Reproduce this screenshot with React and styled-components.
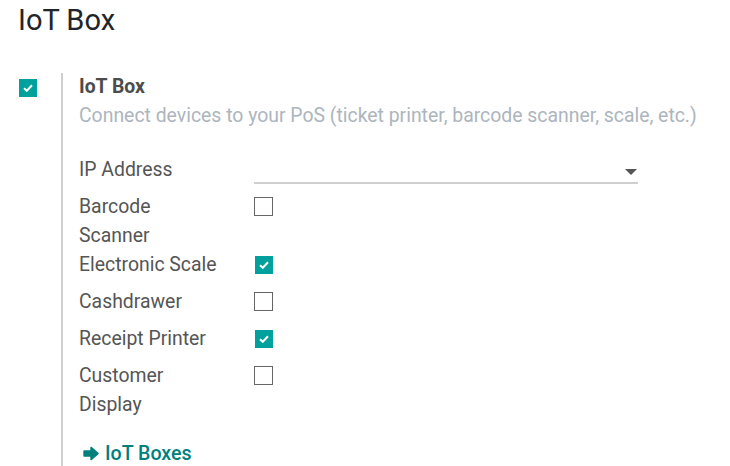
import React from 'react';
import styled, { createGlobalStyle } from 'styled-components';

const GlobalStyle = createGlobalStyle`
  body {
    margin: 0;
    background: #fff;
    font-family: Roboto, "Noto Sans", sans-serif;
  }
`;

const Page = styled.div`
  padding: 0 0 0 18px;
  height: 466px;
  overflow: hidden;
`;

const Title = styled.h2`
  margin: 0;
  padding-top: 2px;
  font-size: 29px;
  font-weight: 400;
  line-height: 36px;
  color: #212529;
`;

const Setting = styled.div`
  display: flex;
  margin-top: 35px;
`;

const LeftPane = styled.div`
  width: 43px;
  padding-top: 6px;
`;

const RightPane = styled.div`
  border-left: 2px solid #cfcfcf;
  padding-left: 16px;
  flex: 1;
  min-height: 400px;
`;

const SettingTitle = styled.div`
  font-size: 19.4px;
  font-weight: 700;
  line-height: 28px;
  color: #4c4c4c;
`;

const Description = styled.div`
  font-size: 19.4px;
  line-height: 29px;
  color: #adb5bd;
  margin-bottom: 25px;
`;

const Row = styled.div`
  display: flex;
  align-items: flex-start;
  min-height: 37px;
`;

const Label = styled.div`
  width: 140px;
  margin-right: 35px;
  font-size: 19.4px;
  line-height: 29px;
  color: #555;
`;

const Field = styled.div`
  width: 384px;
  padding-top: ${(p) => p.$offset || 0}px;
`;

const SelectBox = styled.div`
  position: relative;
  height: 27px;
  border-bottom: 2px solid #cfcfcf;
`;

const Caret = styled.span`
  position: absolute;
  right: 1px;
  top: 14px;
  width: 0;
  height: 0;
  border-left: 6px solid transparent;
  border-right: 6px solid transparent;
  border-top: 6px solid #555;
`;

const Box = styled.span`
  display: flex;
  align-items: center;
  justify-content: center;
  box-sizing: border-box;
  width: ${(p) => (p.$checked ? 18 : 19)}px;
  height: ${(p) => (p.$checked ? 18 : 19)}px;
  margin-left: ${(p) => (p.$checked ? 1 : 0)}px;
  background: ${(p) => (p.$checked ? '#00a09d' : '#fff')};
  border: ${(p) => (p.$checked ? 'none' : '1.5px solid #666')};
`;

const Link = styled.a`
  display: inline-flex;
  align-items: center;
  gap: 6px;
  margin-top: 20px;
  margin-left: 4px;
  font-size: 19.6px;
  font-weight: 500;
  line-height: 29px;
  color: #00807d;
  text-decoration: none;
`;

const Check = () => (
  <svg width="10" height="8" viewBox="0 0 10 8">
    <path d="M1 4.2 L3.8 6.8 L9 1.2" fill="none" stroke="#fff" strokeWidth="2" />
  </svg>
);

const Checkbox = ({ checked }) => (
  <Box $checked={checked}>{checked && <Check />}</Box>
);

const Arrow = () => (
  <svg width="16" height="15" viewBox="0 0 16 15">
    <path
      d="M1.2 5.2 H8.2 V1.6 L14.8 7.5 L8.2 13.4 V9.8 H1.2 Z"
      fill="#00807d"
      stroke="#00807d"
      strokeWidth="1.8"
      strokeLinejoin="round"
    />
  </svg>
);

const devices = [
  { label: 'Barcode Scanner', checked: false },
  { label: 'Electronic Scale', checked: true },
  { label: 'Cashdrawer', checked: false },
  { label: 'Receipt Printer', checked: true },
  { label: 'Customer Display', checked: false },
];

export default function App() {
  return (
    <>
      <GlobalStyle />
      <Page>
        <Title>IoT Box</Title>
        <Setting>
          <LeftPane>
            <Checkbox checked />
          </LeftPane>
          <RightPane>
            <SettingTitle>IoT Box</SettingTitle>
            <Description>
              Connect devices to your PoS (ticket printer, barcode scanner, scale, etc.)
            </Description>
            <Row>
              <Label>IP Address</Label>
              <Field>
                <SelectBox>
                  <Caret />
                </SelectBox>
              </Field>
            </Row>
            {devices.map((d) => (
              <Row key={d.label}>
                <Label>{d.label}</Label>
                <Field $offset={d.checked ? 6 : 5}>
                  <Checkbox checked={d.checked} />
                </Field>
              </Row>
            ))}
            <Link href="#">
              <Arrow />
              IoT Boxes
            </Link>
          </RightPane>
        </Setting>
      </Page>
    </>
  );
}
